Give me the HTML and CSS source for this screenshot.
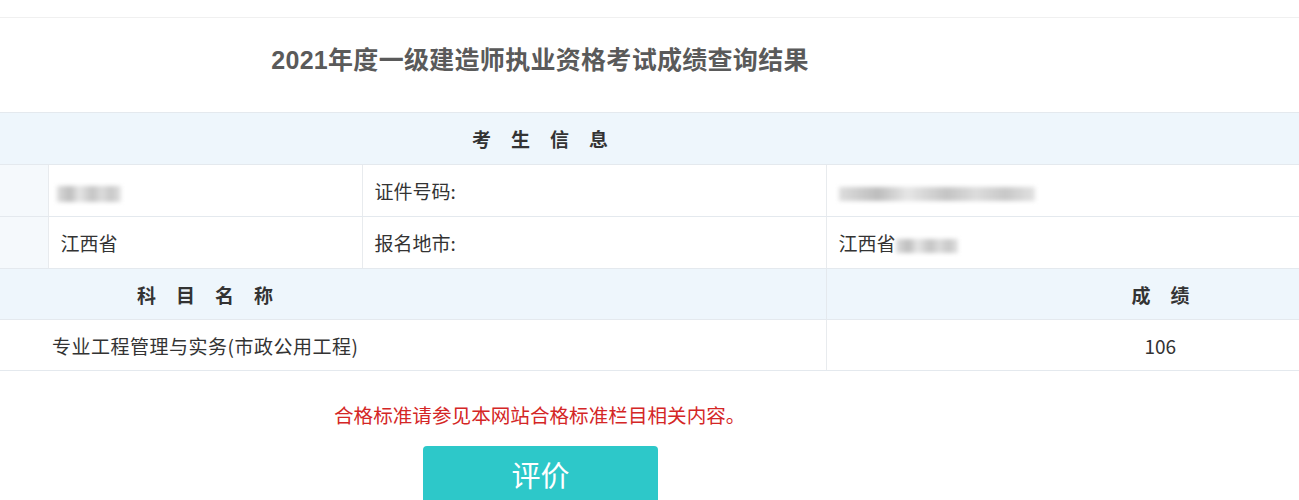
FILE: index.html
```html
<!DOCTYPE html>
<html lang="zh-CN">
<head>
<meta charset="utf-8">
<title>成绩查询结果</title>
<link rel="stylesheet" href="styles.css">
</head>
<body>
<div class="topbar"></div>
<div class="title-wrap">
  <h1 class="title">2021年度一级建造师执业资格考试成绩查询结果</h1>
</div>
<table class="result">
  <colgroup>
    <col class="c1"><col class="c2"><col class="c3"><col class="c4">
  </colgroup>
  <tr class="head">
    <th colspan="4" class="head-info"><span class="spaced">考生信息</span></th>
  </tr>
  <tr>
    <td class="side"></td>
    <td class="val"><span class="blur blur-name"></span></td>
    <td class="label">证件号码:</td>
    <td class="val"><span class="blur blur-id"></span></td>
  </tr>
  <tr>
    <td class="side"></td>
    <td class="val">江西省</td>
    <td class="label">报名地市:</td>
    <td class="val">江西省<span class="blur blur-city"></span></td>
  </tr>
  <tr class="head short">
    <th colspan="3" class="head-subject"><span class="spaced">科目名称</span></th>
    <th class="head-score"><span class="spaced">成绩</span></th>
  </tr>
  <tr class="short">
    <td colspan="3" class="subject">专业工程管理与实务(市政公用工程)</td>
    <td class="score">106</td>
  </tr>
</table>
<p class="notice">合格标准请参见本网站合格标准栏目相关内容。</p>
<div class="actions">
  <button class="btn" type="button">评价</button>
</div>
</body>
</html>
```
FILE: styles.css
```css
* { box-sizing: border-box; }

body {
  margin: 0;
  background: #fff;
  font-family: "Noto Sans CJK SC", "Liberation Sans", sans-serif;
  color: #333;
  overflow: hidden;
}

.topbar {
  height: 18px;
  border-bottom: 1px solid #f0f0f0;
}

.title-wrap {
  width: 1080px;
  height: 94px;
  display: flex;
  align-items: center;
  justify-content: center;
}

.title {
  margin: 0;
  font-family: "Liberation Sans", "Noto Sans CJK SC", sans-serif;
  font-size: 25px;
  font-weight: bold;
  color: #5a5a5a;
  letter-spacing: 0.3px;
  position: relative;
  top: -7px;
}

.result {
  width: 1299px;
  border-collapse: collapse;
  table-layout: fixed;
  font-size: 19px;
}

.c1 { width: 48px; }
.c2 { width: 314px; }
.c3 { width: 464px; }
.c4 { width: 473px; }

.result td, .result th {
  height: 52px;
  border-top: 1px solid #e4e9ee;
  border-bottom: 1px solid #e4e9ee;
  padding: 0;
  vertical-align: middle;
}

.result .short td, .result .short th { height: 51px; }

.head th {
  background: #eef6fc;
  font-weight: bold;
  font-size: 19px;
  color: #333;
  text-align: left;
}

.spaced { letter-spacing: 20px; }

.head-info { padding-left: 472px !important; }
.head-subject { padding-left: 137px !important; }
.head-score {
  padding-left: 305px !important;
  border-left: 1px solid #e4e9ee;
}

.side {
  background: #f5f9fc;
  border-right: 1px solid #e8ebee;
}

.val {
  padding-left: 12px !important;
  color: #333;
}

.label {
  padding-left: 12px !important;
  border-left: 1px solid #e8ebee;
  border-right: 1px solid #e8ebee;
  color: #333;
}

.subject {
  padding-left: 52px !important;
  color: #333;
  letter-spacing: 0.5px;
}

.score {
  border-left: 1px solid #e8ebee;
  padding-left: 318px !important;
  color: #333;
}

/* masked personal data */
.blur {
  display: inline-block;
  vertical-align: middle;
  background: linear-gradient(90deg, #ddd, #bdbdbd 20%, #e6e6e6 35%, #c4c4c4 55%, #dcdcdc 70%, #c8c8c8 85%, #e2e2e2);
  filter: blur(2px);
}
.blur-name { width: 64px; height: 16px; margin-left: -4px; }
.blur-id { width: 196px; height: 14px; }
.blur-city { width: 62px; height: 14px; }

.notice {
  margin: 31px 0 0 334px;
  font-size: 19.6px;
  color: #d42626;
  line-height: 26px;
}

.actions {
  margin: 18px 0 0 423px;
}

.btn {
  width: 235px;
  height: 64px;
  border: 0;
  border-radius: 4px;
  background: #2dc8c9;
  color: #fff;
  font-family: "Noto Sans CJK SC", sans-serif;
  font-size: 29px;
  padding: 0 0 8px;
}
```
